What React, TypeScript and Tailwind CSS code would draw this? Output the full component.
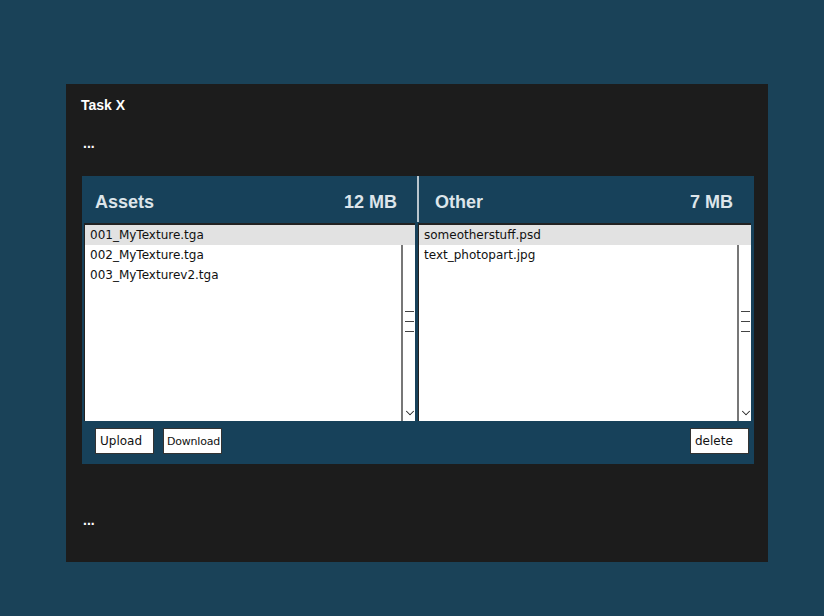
import { ChevronDown } from "lucide-react";

type Pane = { title: string; size: string; files: string[] };

const hand = "font-['Comic_Sans_MS','DejaVu_Sans',sans-serif]";

function FileList({ files }: { files: string[] }) {
  return (
    <div className="relative flex-1 bg-white border-t-2 border-l border-[#222] h-[198px] overflow-hidden">
      {files.map((f, i) => (
        <div
          key={f}
          className={`h-5 pl-[5px] text-[12px] leading-5 text-[#111] ${hand} ${
            i === 0 ? "bg-[#e2e2e2]" : ""
          }`}
        >
          {f}
        </div>
      ))}
      <div className="absolute right-0 top-5 bottom-0 w-[14px] border-l-2 border-[#777]">
        <div className="mt-[66px] ml-[2px] flex flex-col gap-[9px]">
          <div className="h-px w-[9px] bg-[#444]" />
          <div className="h-px w-[9px] bg-[#444]" />
          <div className="h-px w-[9px] bg-[#444]" />
        </div>
        <ChevronDown className="absolute bottom-[1px] left-0 h-[14px] w-[14px] text-[#222]" strokeWidth={1.75} />
      </div>
    </div>
  );
}

function Btn({ label, w }: { label: string; w: string }) {
  return (
    <button
      className={`${w} h-[26px] pl-[4px] bg-white border border-[#333] text-[12px] leading-none text-[#111] text-left whitespace-nowrap ${hand}`}
    >
      {label}
    </button>
  );
}

export default function App() {
  const panes: Pane[] = [
    {
      title: "Assets",
      size: "12 MB",
      files: ["001_MyTexture.tga", "002_MyTexture.tga", "003_MyTexturev2.tga"],
    },
    { title: "Other", size: "7 MB", files: ["someotherstuff.psd", "text_photopart.jpg"] },
  ];

  return (
    <div className="w-[824px] h-[616px] bg-[#1a4258] pt-[84px] pl-[66px] font-['Liberation_Sans',Arial,sans-serif]">
      <div className="w-[702px] h-[478px] bg-[#1c1c1c] flex flex-col">
        <div className="pl-[15px] pt-[13px] text-[14px] font-bold text-white leading-4">Task X</div>
        <div className="pl-[17px] mt-[22px] text-[14px] font-bold text-white leading-4">...</div>
        <div className="shrink-0 ml-[16px] mt-[25px] w-[672px] h-[288px] bg-[#17415a] flex flex-col">
          <div className="flex">
            <div className="w-[335px] flex flex-col">
              <div className="h-[47px] flex items-start justify-between pt-[15px] leading-[22px] pl-[13px] pr-[20px] text-[18px] font-bold text-[#dde5ea]">
                <span>{panes[0].title}</span>
                <span>{panes[0].size}</span>
              </div>
              <div className="flex pl-[2px] pr-[2px]">
                <FileList files={panes[0].files} />
              </div>
            </div>
            <div className="w-[2px] h-[46px] bg-[#b9c6ce]" />
            <div className="flex-1 flex flex-col">
              <div className="h-[47px] flex items-start justify-between pt-[15px] leading-[22px] pl-[16px] pr-[21px] text-[18px] font-bold text-[#dde5ea]">
                <span>{panes[1].title}</span>
                <span>{panes[1].size}</span>
              </div>
              <div className="flex pr-[3px] -ml-[1px]">
                <FileList files={panes[1].files} />
              </div>
            </div>
          </div>
          <div className="flex items-center mt-[7px] pl-[13px] pr-[5px]">
            <div className="flex gap-[9px]">
              <Btn label="Upload" w="w-[59px]" />
              <Btn label="Download" w="w-[59px] !text-[11px] !pl-[3px] tracking-[-0.2px]" />
            </div>
            <div className="ml-auto">
              <Btn label="delete" w="w-[59px]" />
            </div>
          </div>
        </div>
        <div className="pl-[17px] mt-[48px] text-[14px] font-bold text-white leading-4">...</div>
      </div>
    </div>
  );
}
